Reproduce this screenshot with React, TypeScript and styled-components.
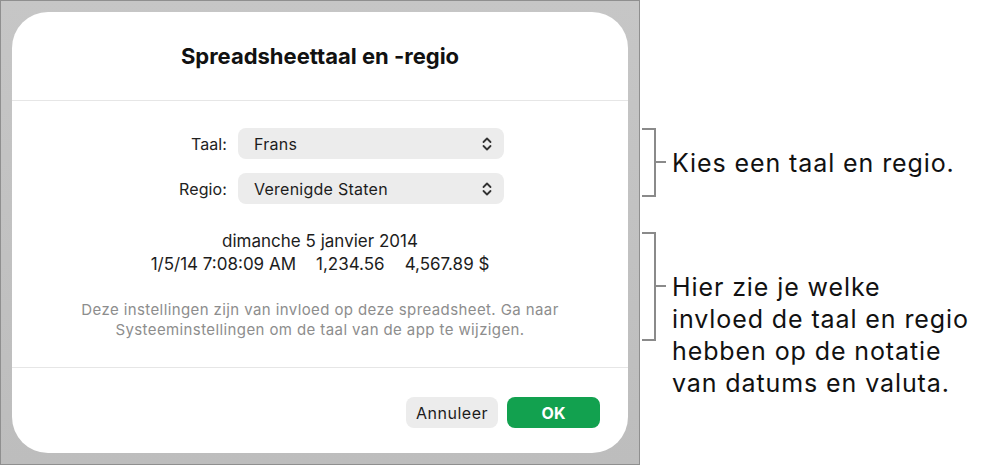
import styled, { createGlobalStyle } from 'styled-components';

const GlobalStyle = createGlobalStyle`
    html, body {
        margin: 0;
        padding: 0;
        background: #ffffff;
    }
    body {
        font-family: Inter, Roboto, "Liberation Sans", sans-serif;
        color: #1a1a1a;
    }
`;

const Page = styled.div`
    display: flex;
    width: 982px;
    height: 466px;
    background: #fff;
`;

const Backdrop = styled.div`
    box-sizing: border-box;
    width: 640px;
    height: 465px;
    padding: 11px;
    background: linear-gradient(180deg, #c6c6c6 0%, #bdbdbd 100%);
    border: 1px solid #8f8f8f;
    display: flex;
`;

const Dialog = styled.div`
    flex: 1;
    background: #fff;
    border-radius: 36px;
    display: flex;
    flex-direction: column;
`;

const Header = styled.div`
    box-sizing: border-box;
    height: 89px;
    display: flex;
    align-items: center;
    justify-content: center;
    border-bottom: 1px solid #e6e6e6;
`;

const Title = styled.h1`
    margin: 0;
    font-size: 22px;
    font-weight: 700;
    color: #111;
`;

const Body = styled.div`
    box-sizing: border-box;
    display: flex;
    flex-direction: column;
    padding-top: 27px;
    height: 267px;
    border-bottom: 1px solid #e6e6e6;
`;

const Form = styled.div`
    display: grid;
    grid-template-columns: 215px 266px;
    column-gap: 11px;
    row-gap: 14px;
    align-items: center;
`;

const Label = styled.span`
    text-align: right;
    font-size: 16px;
    letter-spacing: 0.1px;
    color: #222;
`;

const Select = styled.div`
    height: 31px;
    box-sizing: border-box;
    padding: 0 12px 0 16px;
    border-radius: 8px;
    background: #ececec;
    display: flex;
    align-items: center;
    justify-content: space-between;
    font-size: 16px;
    letter-spacing: 0.25px;
    color: #1c1c1c;
`;

const Preview = styled.div`
    margin-top: 26px;
    text-align: center;
    font-size: 17px;
    line-height: 23px;
    color: #1c1c1c;
`;

const PreviewLine = styled.div<{ $spaced?: boolean }>`
    display: flex;
    justify-content: center;
    gap: ${p => (p.$spaced ? '20px' : '0')};
`;

const Note = styled.p`
    margin: 24px 0 0;
    text-align: center;
    font-size: 15px;
    letter-spacing: 0.4px;
    line-height: 20px;
    color: #8d8d8d;
`;

const Footer = styled.div`
    flex: 1;
    display: flex;
    justify-content: flex-end;
    align-items: flex-start;
    gap: 9px;
    padding: 29px 28px 0 0;
`;

const Button = styled.button<{ $primary?: boolean }>`
    height: 31px;
    width: ${p => (p.$primary ? '93px' : '92px')};
    border: none;
    border-radius: 8px;
    font-family: inherit;
    font-size: 16px;
    letter-spacing: ${p => (p.$primary ? '0.2px' : '0.5px')};
    font-weight: ${p => (p.$primary ? 700 : 400)};
    background: ${p => (p.$primary ? '#12a14f' : '#ececec')};
    color: ${p => (p.$primary ? '#fff' : '#1c1c1c')};
    padding: 0;
`;

const Notes = styled.div`
    display: flex;
    flex-direction: column;
    gap: 35px;
    padding: 128px 0 0 2px;
`;

const Callout = styled.div`
    display: flex;
    align-items: flex-start;
`;

const Bracket = styled.div<{ $h: number }>`
    position: relative;
    box-sizing: border-box;
    width: 14px;
    height: ${p => p.$h}px;
    border: 2px solid #8a8a8a;
    border-left: none;
    flex-shrink: 0;

    &::after {
        content: '';
        position: absolute;
        left: 12px;
        top: calc(50% - 2px);
        width: 12px;
        height: 2px;
        background: #8a8a8a;
    }
`;

const CalloutText = styled.div<{ $offset: number }>`
    margin: ${p => p.$offset}px 0 0 16px;
    font-size: 25px;
    letter-spacing: 0.9px;
    line-height: 32px;
    color: #111;
`;

const Chevrons = () => (
    <svg width="10" height="14" viewBox="0 0 10 14" fill="none" stroke="#333" strokeWidth="1.8" strokeLinecap="round" strokeLinejoin="round">
        <path d="M1.5 5 L5 1.5 L8.5 5" />
        <path d="M1.5 9 L5 12.5 L8.5 9" />
    </svg>
);

export default function App() {
    return (
        <Page>
            <GlobalStyle />
            <Backdrop>
                <Dialog>
                    <Header>
                        <Title>Spreadsheettaal en -regio</Title>
                    </Header>
                    <Body>
                        <Form>
                            <Label>Taal:</Label>
                            <Select>Frans<Chevrons /></Select>
                            <Label>Regio:</Label>
                            <Select>Verenigde Staten<Chevrons /></Select>
                        </Form>
                        <Preview>
                            <div>dimanche 5 janvier 2014</div>
                            <PreviewLine $spaced>
                                <span>1/5/14 7:08:09 AM</span>
                                <span>1,234.56</span>
                                <span>4,567.89 $</span>
                            </PreviewLine>
                        </Preview>
                        <Note>
                            Deze instellingen zijn van invloed op deze spreadsheet. Ga naar<br />
                            Systeeminstellingen om de taal van de app te wijzigen.
                        </Note>
                    </Body>
                    <Footer>
                        <Button>Annuleer</Button>
                        <Button $primary>OK</Button>
                    </Footer>
                </Dialog>
            </Backdrop>
            <Notes>
                <Callout>
                    <Bracket $h={69} />
                    <CalloutText $offset={19}>Kies een taal en regio.</CalloutText>
                </Callout>
                <Callout>
                    <Bracket $h={109} />
                    <CalloutText $offset={39}>
                        Hier zie je welke<br />
                        invloed de taal en regio<br />
                        hebben op de notatie<br />
                        van datums en valuta.
                    </CalloutText>
                </Callout>
            </Notes>
        </Page>
    );
}
